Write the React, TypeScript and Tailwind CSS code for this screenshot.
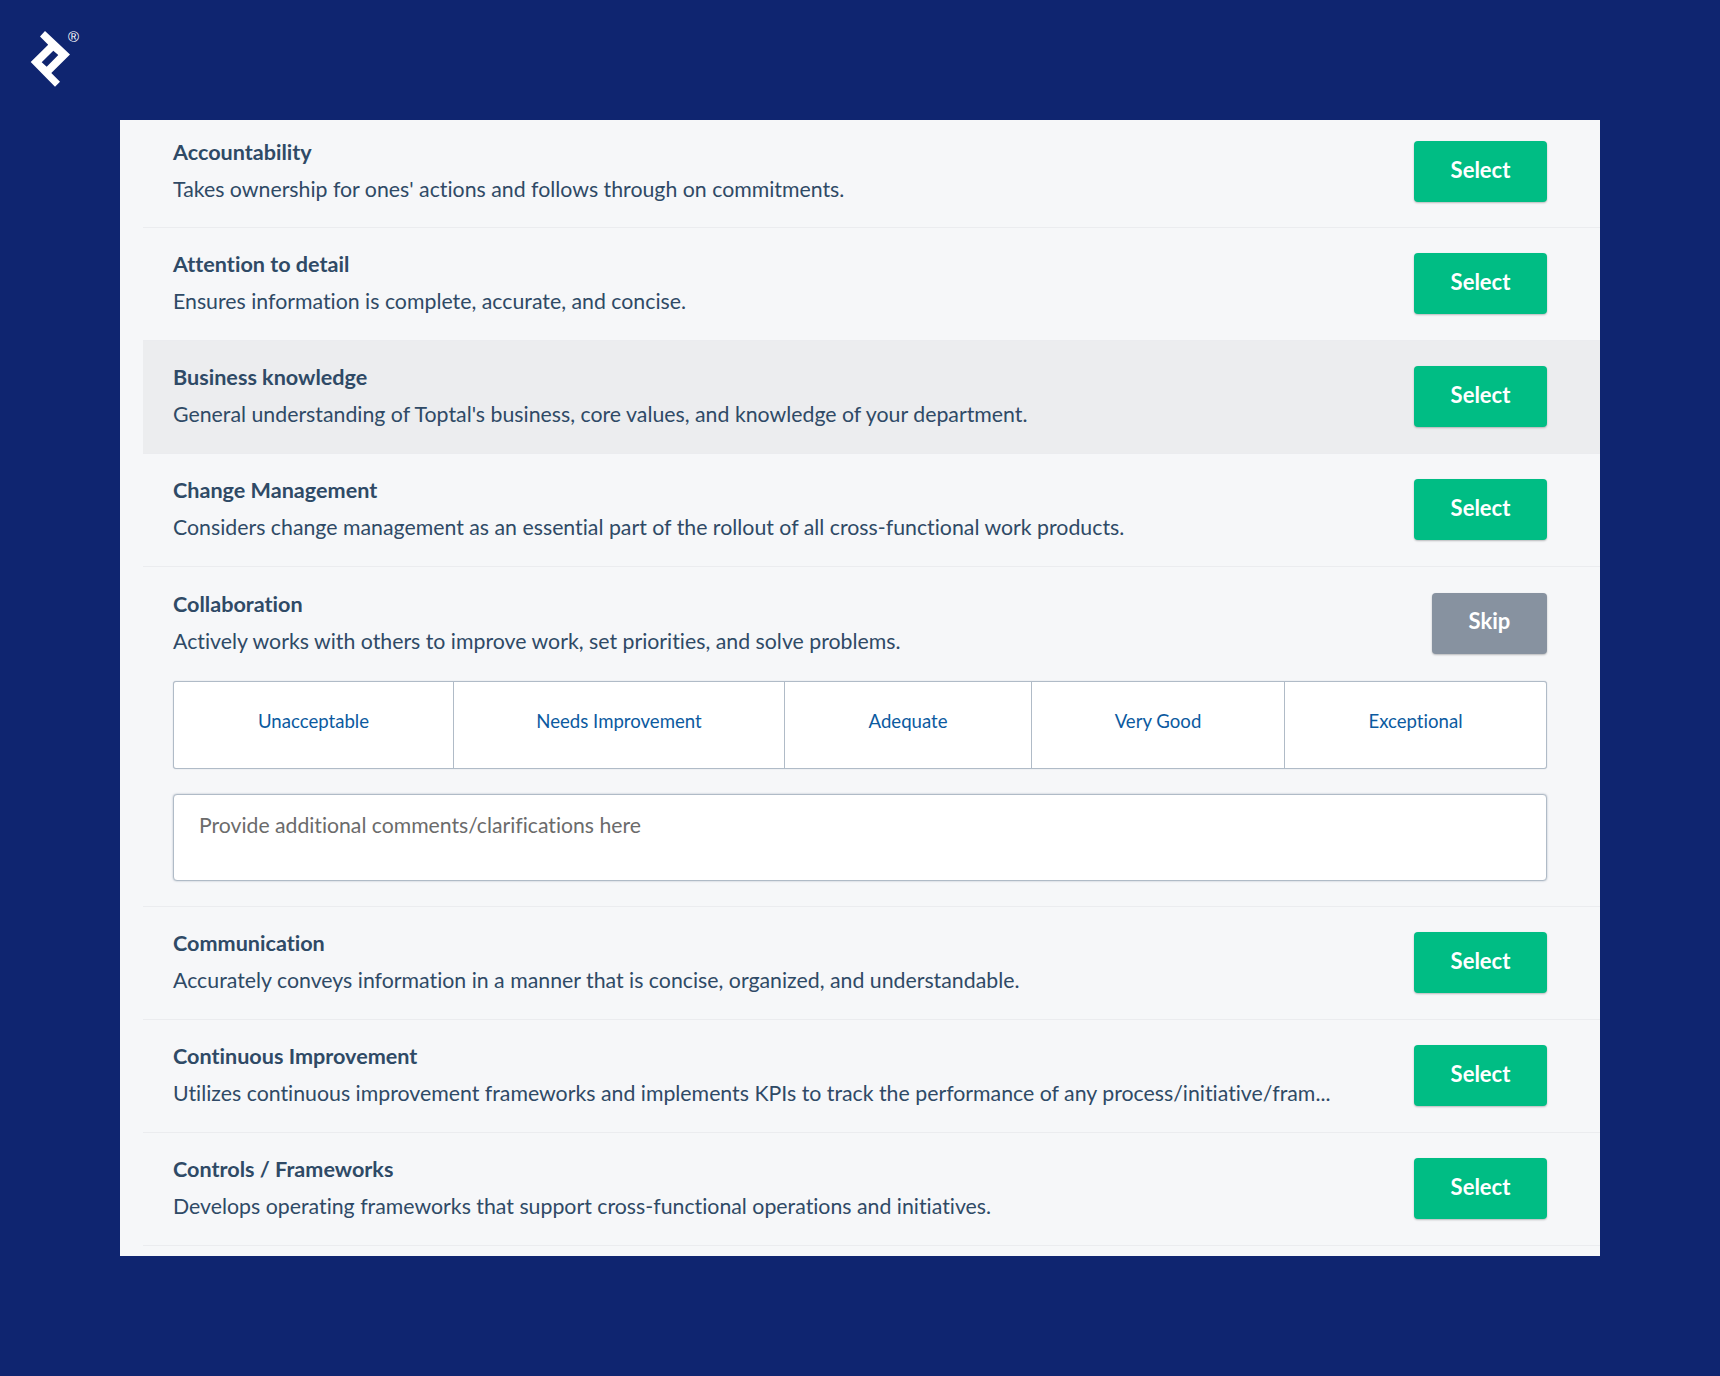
const rows = [
  { title: 'Accountability', text: "Takes ownership for ones' actions and follows through on commitments." },
  { title: 'Attention to detail', text: 'Ensures information is complete, accurate, and concise.' },
  { title: 'Business knowledge', text: "General understanding of Toptal's business, core values, and knowledge of your department.", hover: true },
  { title: 'Change Management', text: 'Considers change management as an essential part of the rollout of all cross-functional work products.' },
  { title: 'Collaboration', text: 'Actively works with others to improve work, set priorities, and solve problems.', open: true },
  { title: 'Communication', text: 'Accurately conveys information in a manner that is concise, organized, and understandable.' },
  { title: 'Continuous Improvement', text: 'Utilizes continuous improvement frameworks and implements KPIs to track the performance of any process/initiative/fram...' },
  { title: 'Controls / Frameworks', text: 'Develops operating frameworks that support cross-functional operations and initiatives.' },
];

const ratings = ['Unacceptable', 'Needs Improvement', 'Adequate', 'Very Good', 'Exceptional'];

function Logo() {
  return (
    <svg width="60" height="68" viewBox="24 24 60 68" className="text-white">
      <path
        fill="currentColor"
        fillRule="evenodd"
        d="M45 31 L70 54.5 L51.3 73 L60 81.7 L55 86.7 L30.7 62 L48.2 44.8 L40 36.5 Z M41.7 62.3 L53.3 50.7 L58.3 55 L46.7 66.7 Z"
      />
    </svg>
  );
}

export default function App() {
  return (
    <div className="min-h-[1376px] bg-[#0f2570] font-['Lato',sans-serif] [font-variant-ligatures:none]">
      <div className="relative h-[120px]">
        <div className="absolute left-[24px] top-[24px]">
          <Logo />
        </div>
        <span className="absolute left-[68px] top-[29px] font-['Liberation_Sans',sans-serif] text-[15px] leading-[16px] text-white">®</span>
      </div>

      <div className="mx-[120px] h-[1136px] overflow-hidden bg-[#f6f7f9] pl-[23px]">
        {rows.map((row, i) => (
          <div
            key={row.title}
            className={`border-b border-[#ebecef] pl-[30px] pr-[53px] ${row.hover ? 'bg-[#ecedef]' : ''} ${i === 0 ? 'pt-[21px] pb-[25px]' : row.open ? 'pt-[26px] pb-[25px]' : 'pt-[25px] pb-[26px]'}`}
          >
            <div className="flex items-start justify-between">
              <div className="-mt-[3px] h-[61px]">
                <div className="text-[21.6px] font-bold leading-[28px] text-[#2f4a66]">{row.title}</div>
                <div className="mt-[9px] text-[21.3px] leading-[28px] text-[#2f4a66]">{row.text}</div>
              </div>
              {row.open ? (
                <button className="h-[61px] w-[115px] rounded-[4px] bg-[#8792a0] pb-[6px] text-[22px] font-bold text-white shadow-[0_1px_2px_rgba(0,0,0,0.25)]">
                  Skip
                </button>
              ) : (
                <button className="h-[61px] w-[133px] rounded-[4px] bg-[#00bd84] pb-[4px] text-[22px] font-bold text-white shadow-[0_1px_2px_rgba(0,0,0,0.25)]">
                  Select
                </button>
              )}
            </div>

            {row.open && (
              <>
                <div className="mt-[27px] grid h-[88px] grid-cols-[279px_331px_247px_253px_1fr] rounded-[3px] border border-[#b0bbc7] bg-white shadow-[0_0_1px_rgba(120,135,155,0.6)]">
                  {ratings.map((r, j) => (
                    <div
                      key={r}
                      className={`pt-[27px] text-center text-[18.6px] leading-[24px] text-[#0b5aa0] ${j > 0 ? 'border-l border-[#b0bbc7]' : ''}`}
                    >
                      {r}
                    </div>
                  ))}
                </div>
                <div className="mt-[25px] h-[87px] rounded-[4px] border border-[#b0bbc7] bg-white px-[25px] pt-[16px] text-[21.2px] leading-[28px] text-[#6b6b6b] shadow-[0_0_2px_rgba(120,135,155,0.6)]">
                  Provide additional comments/clarifications here
                </div>
              </>
            )}
          </div>
        ))}
      </div>
    </div>
  );
}
